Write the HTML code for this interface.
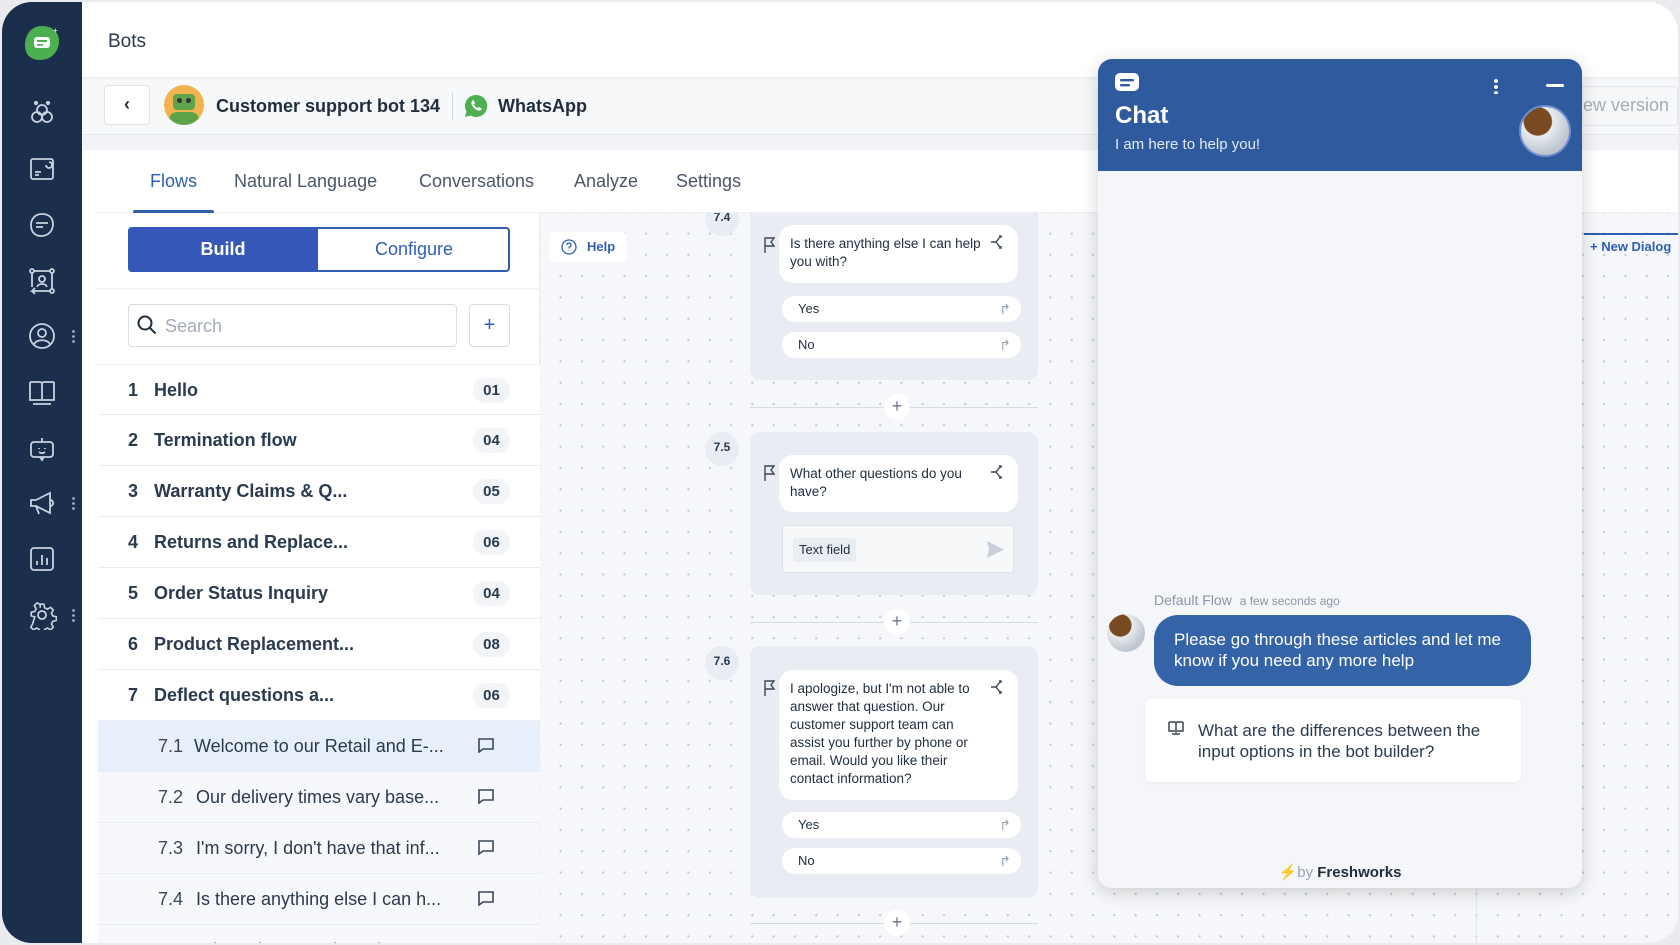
<!DOCTYPE html>
<html><head><meta charset="utf-8">
<style>
*{box-sizing:border-box;margin:0;padding:0}
body{width:1680px;height:945px;overflow:hidden;background:#e9ebee;font-family:"Liberation Sans",sans-serif;color:#1f2d3d;position:relative}
.abs{position:absolute}
#frame{position:absolute;left:2px;top:2px;width:1676px;height:941px;border-radius:30px;overflow:hidden;background:#fff}
#side{position:absolute;left:0;top:0;width:80px;height:941px;background:#1b2e4b}
.si{position:absolute;left:25px;width:30px;height:30px}
.dots3{position:absolute;left:70px;width:3px;height:14px;background:radial-gradient(circle,#8fa0b8 1.3px,transparent 1.6px) 0 0/3px 5px repeat-y}
.row{position:absolute;left:96px;width:442px;height:51px;border-bottom:1px solid #e8ecf1;background:#fff}
.row .n{position:absolute;left:30px;top:15px;font-size:18px;font-weight:bold;color:#2a3a4f}
.row .t{position:absolute;left:56px;top:15px;font-size:18px;font-weight:bold;color:#2a3a4f}
.row .b{position:absolute;left:375px;top:13px;width:37px;height:25px;border-radius:12px;background:#f2f4f7;font-size:15px;font-weight:bold;text-align:center;line-height:25px;color:#2a3a4f}
.sub{background:#f6f8fb}
.sub .n{left:60px;font-weight:normal;color:#3a475a}
.sub .t{left:98px;font-weight:normal;color:#2a3a4f}
.sub .ic{position:absolute;left:379px;top:16px;width:18px;height:16px}
.card{position:absolute;left:748px;width:288px;background:#e9edf3;border-radius:10px}
.bub{position:absolute;left:29px;width:239px;background:#fff;border-radius:14px;font-size:13.5px;line-height:18px;color:#1f2d3d;padding:10px 30px 10px 11px}
.opt{position:absolute;left:32px;width:239px;height:26px;background:#fff;border-radius:13px;font-size:13px;line-height:26px;padding-left:16px;color:#1f2d3d}
.opt:after{content:"↱";position:absolute;right:10px;top:0;color:#9aa5b4;font-size:14px}
.num{position:absolute;left:703px;width:34px;height:34px;border-radius:17px;background:#e9edf3;font-size:12px;font-weight:bold;text-align:center;line-height:30px;color:#2a3a4f}
.plus{position:absolute;left:748px;width:288px;height:1px;background:#d5dbe3}
.plus span{position:absolute;left:134px;top:-13px;width:26px;height:26px;border-radius:13px;background:#fff;text-align:center;line-height:25px;color:#6b778a;font-size:18px}
.flag{position:absolute;left:14px;width:12px;height:16px}
.br{position:absolute;right:14px;top:10px;width:14px;height:14px}
#clip{position:absolute;left:538px;top:211px;width:1142px;height:734px;overflow:hidden}
#clipin{position:absolute;left:-538px;top:-211px;width:1680px;height:945px}
</style></head><body>
<div id="frame">
<div id="side">
  <svg class="abs" style="left:20px;top:22px" width="40" height="38" viewBox="0 0 40 38"><path d="M20 2C30 2 37 8 37 17C37 28 29 36 18 36C8 36 3 30 3 21C3 10 10 2 20 2Z" fill="#4caf50"/><rect x="12" y="13" width="16" height="11" rx="3" fill="#fff"/><rect x="15" y="16" width="10" height="2" fill="#4caf50"/><rect x="15" y="20" width="6" height="1.6" fill="#4caf50"/><text x="31" y="9" font-size="8" fill="#fff">+</text></svg>
  <svg class="si" style="top:96px" viewBox="0 0 30 30" fill="none" stroke="#c9d3e0" stroke-width="1.8"><circle cx="10" cy="19" r="5"/><circle cx="20" cy="19" r="5"/><circle cx="15" cy="12" r="5"/><circle cx="9" cy="5" r="1.2"/><circle cx="21" cy="5" r="1.2"/></svg>
  <svg class="si" style="top:152px" viewBox="0 0 30 30" fill="none" stroke="#c9d3e0" stroke-width="1.8"><rect x="4" y="5" width="22" height="20" rx="2"/><path d="M8 18h6M8 21h4M19 11a3 3 0 1 0 3-3"/></svg>
  <svg class="si" style="top:208px" viewBox="0 0 30 30" fill="none" stroke="#c9d3e0" stroke-width="1.8"><path d="M15 4C22 4 26 8 26 14C26 21 21 26 14 26C8 26 4 22 4 15C4 8 9 4 15 4Z"/><path d="M9 13h12M9 17h7"/></svg>
  <svg class="si" style="top:264px" viewBox="0 0 30 30" fill="none" stroke="#c9d3e0" stroke-width="1.8"><circle cx="5" cy="5" r="2"/><circle cx="25" cy="5" r="2"/><circle cx="25" cy="25" r="2"/><path d="M7 5h16M25 7v16M23 25H5l3-3M5 25l3 3M5 7v14"/><circle cx="15" cy="13" r="3"/><path d="M10 21c1-4 9-4 10 0"/></svg>
  <svg class="si" style="top:319px" viewBox="0 0 30 30" fill="none" stroke="#c9d3e0" stroke-width="1.8"><circle cx="15" cy="15" r="12"/><circle cx="15" cy="12" r="4"/><path d="M7 23c3-5 13-5 16 0"/></svg>
  <svg class="si" style="top:375px" viewBox="0 0 30 30" fill="none" stroke="#c9d3e0" stroke-width="1.8"><path d="M3 5h10c1 0 2 1 2 2v17M27 5H17c-1 0-2 1-2 2M3 5v18h11M27 5v18H16M6 27h18"/></svg>
  <svg class="si" style="top:431px" viewBox="0 0 30 30" fill="none" stroke="#c9d3e0" stroke-width="1.8"><rect x="4" y="9" width="22" height="15" rx="3"/><path d="M15 9V5M12 15v1M18 15v1M12 19c2 1.5 4 1.5 6 0M13 24l2 3 2-3"/></svg>
  <svg class="si" style="top:486px" viewBox="0 0 30 30" fill="none" stroke="#c9d3e0" stroke-width="1.8"><path d="M4 12v6h5l14 7V5L9 12H4ZM9 18l3 8M23 12c2 0 3 1 3 3s-1 3-3 3"/></svg>
  <svg class="si" style="top:542px" viewBox="0 0 30 30" fill="none" stroke="#c9d3e0" stroke-width="1.8"><rect x="4" y="4" width="22" height="22" rx="3"/><path d="M10 21v-4M15 21V11M20 21v-7"/></svg>
  <svg class="si" style="top:598px" viewBox="0 0 30 30" fill="none" stroke="#c9d3e0" stroke-width="1.8"><circle cx="15" cy="15" r="4"/><path d="M13 3h4l1 4 3 1.5 3.5-2 3 3-2 3.5 1.5 3 4 1v4l-4 1-1.5 3 2 3.5-3 3-3.5-2-3 1.5-1 4h-4l-1-4-3-1.5-3.5 2-3-3 2-3.5L7 17l-4-1v-4l4-1 1.5-3-2-3.5 3-3 3.5 2L13 7Z" transform="translate(1.5 1.5) scale(0.9)"/></svg>
  <div class="dots3" style="top:327px"></div><div class="dots3" style="top:494px"></div><div class="dots3" style="top:606px"></div>
</div>
<div class="abs" style="left:80px;top:0;width:1600px;height:76px;background:#fff;border-bottom:1px solid #eceff3"></div>
<div class="abs" style="left:106px;top:29px;font-size:19px;color:#2a3a4f">Bots</div>
<div class="abs" style="left:80px;top:76px;width:1600px;height:72px;background:#f1f3f6"></div>
<div class="abs" style="left:80px;top:78px;width:1600px;height:55px;background:#f7f8fa;border-bottom:1px solid #e6e9ee"></div>
<div class="abs" style="left:102px;top:83px;width:46px;height:40px;background:#fff;border:1px solid #dfe3e8;border-radius:4px;text-align:center;line-height:37px;font-size:18px;font-weight:bold;color:#1f2d3d">‹</div>
<div class="abs" style="left:162px;top:83px;width:40px;height:40px;border-radius:20px;background:#f0b34d;overflow:hidden"><div class="abs" style="left:9px;top:9px;width:22px;height:16px;background:#5fa34a;border-radius:4px"></div><div class="abs" style="left:13px;top:13px;width:5px;height:5px;background:#333;border-radius:3px"></div><div class="abs" style="left:22px;top:13px;width:5px;height:5px;background:#333;border-radius:3px"></div><div class="abs" style="left:5px;top:27px;width:30px;height:16px;background:#5fa34a;border-radius:8px"></div></div>
<div class="abs" style="left:214px;top:94px;font-size:18px;font-weight:bold;color:#1f2d3d">Customer support bot 134</div>
<div class="abs" style="left:450px;top:90px;width:1px;height:28px;background:#d3d8de"></div>
<svg class="abs" style="left:462px;top:92px" width="24" height="24" viewBox="0 0 24 24"><path d="M12 1a11 11 0 0 0-9.5 16.5L1 23l5.7-1.5A11 11 0 1 0 12 1Z" fill="#4caf50"/><path d="M8 7c.5-1 1.5-1 2 0l1 2-1 1.5c.5 1.5 2 3 3.5 3.5L15 13l2 1c1 .5 1 1.5 0 2-2 1.5-5 0-7-2S6.5 9 8 7Z" fill="#fff"/></svg>
<div class="abs" style="left:496px;top:94px;font-size:18px;font-weight:bold;color:#1f2d3d">WhatsApp</div>
<div class="abs" style="left:1560px;top:84px;width:116px;height:40px;background:#f6f7f9;border:1px solid #e3e6eb;border-radius:4px"></div>
<div class="abs" style="left:1581px;top:93px;font-size:18px;color:#a4adb8">ew version</div>
<div class="abs" style="left:94px;top:148px;width:1586px;height:797px;background:#fff"></div>
<div class="abs" style="left:148px;top:169px;font-size:18px;color:#2f5fb3">Flows</div>
<div class="abs" style="left:232px;top:169px;font-size:18px;color:#4a5668">Natural Language</div>
<div class="abs" style="left:417px;top:169px;font-size:18px;color:#4a5668">Conversations</div>
<div class="abs" style="left:572px;top:169px;font-size:18px;color:#4a5668">Analyze</div>
<div class="abs" style="left:674px;top:169px;font-size:18px;color:#4a5668">Settings</div>
<div class="abs" style="left:94px;top:210px;width:1586px;height:1px;background:#eef0f3"></div>
<div class="abs" style="left:131px;top:208px;width:81px;height:4px;background:#2f5fb3;border-radius:2px"></div>
<div class="abs" style="left:538px;top:211px;width:1142px;height:734px;background:#f5f7fa radial-gradient(circle,#c5ccd6 1px,transparent 1.4px) 10px 10px/21.3px 21.3px"></div>
<div class="abs" style="left:1474px;top:211px;width:1px;height:734px;background:#e3e7ec"></div>
<div class="abs" style="left:1582px;top:231px;width:98px;height:2px;background:#2f5fb3"></div>
<div class="abs" style="left:1588px;top:237px;font-size:13px;font-weight:bold;color:#2f5fb3">+ New Dialog</div>
<div class="abs" style="left:548px;top:230px;width:76px;height:30px;background:#fff;border-radius:4px"></div>
<svg class="abs" style="left:559px;top:237px" width="16" height="16" viewBox="0 0 16 16" fill="none" stroke="#2f5fb3" stroke-width="1.3"><circle cx="8" cy="8" r="7"/><path d="M6 6a2 2 0 1 1 2.5 2c-.5.2-.5.8-.5 1.5M8 11.5v.5"/></svg>
<div class="abs" style="left:585px;top:237px;font-size:13px;font-weight:bold;color:#2f5fb3">Help</div>
<div class="abs" style="left:94px;top:211px;width:444px;height:734px;background:#fff;border-right:1px solid #e6e9ee"></div>
<div class="abs" style="left:126px;top:225px;width:382px;height:45px;border:2px solid #2f5fb3;border-radius:4px;background:#fff"></div>
<div class="abs" style="left:126px;top:225px;width:190px;height:45px;background:#3558b8;border-radius:4px 0 0 4px;color:#fff;font-size:18px;font-weight:bold;text-align:center;line-height:45px">Build</div>
<div class="abs" style="left:316px;top:225px;width:192px;height:45px;color:#2f5fb3;font-size:18px;text-align:center;line-height:45px">Configure</div>
<div class="abs" style="left:94px;top:286px;width:444px;height:1px;background:#eef0f3"></div>
<div class="abs" style="left:126px;top:302px;width:329px;height:43px;border:1px solid #d7dce3;border-radius:4px;background:#fff"></div>
<svg class="abs" style="left:135px;top:313px" width="20" height="20" viewBox="0 0 20 20" fill="none" stroke="#1f2d3d" stroke-width="2"><circle cx="8" cy="8" r="6.5"/><path d="M13 13l5.5 5.5"/></svg>
<div class="abs" style="left:163px;top:314px;font-size:18px;color:#a3acb8">Search</div>
<div class="abs" style="left:467px;top:302px;width:41px;height:43px;border:1px solid #d7dce3;border-radius:4px;background:#fff;text-align:center;line-height:40px;font-size:20px;color:#2f5fb3">+</div>
<div class="row" style="top:362px;border-top:1px solid #eef0f3"><span class="n">1</span><span class="t">Hello</span><span class="b">01</span></div>
<div class="row" style="top:413px"><span class="n">2</span><span class="t">Termination flow</span><span class="b">04</span></div>
<div class="row" style="top:464px"><span class="n">3</span><span class="t">Warranty Claims &amp; Q...</span><span class="b">05</span></div>
<div class="row" style="top:515px"><span class="n">4</span><span class="t">Returns and Replace...</span><span class="b">06</span></div>
<div class="row" style="top:566px"><span class="n">5</span><span class="t">Order Status Inquiry</span><span class="b">04</span></div>
<div class="row" style="top:617px"><span class="n">6</span><span class="t">Product Replacement...</span><span class="b">08</span></div>
<div class="row" style="top:668px"><span class="n">7</span><span class="t">Deflect questions a...</span><span class="b">06</span></div>
<div class="row sub" style="top:719px;background:#e7f0fa"><span class="n">7.1</span><span class="t" style="left:96px">Welcome to our Retail and E-...</span><svg class="ic" viewBox="0 0 18 16" fill="none" stroke="#3a475a" stroke-width="1.6"><path d="M2 2h14v10H6l-4 3Z"/></svg></div>
<div class="row sub" style="top:770px"><span class="n">7.2</span><span class="t">Our delivery times vary base...</span><svg class="ic" viewBox="0 0 18 16" fill="none" stroke="#3a475a" stroke-width="1.6"><path d="M2 2h14v10H6l-4 3Z"/></svg></div>
<div class="row sub" style="top:821px"><span class="n">7.3</span><span class="t">I'm sorry, I don't have that inf...</span><svg class="ic" viewBox="0 0 18 16" fill="none" stroke="#3a475a" stroke-width="1.6"><path d="M2 2h14v10H6l-4 3Z"/></svg></div>
<div class="row sub" style="top:872px"><span class="n">7.4</span><span class="t">Is there anything else I can h...</span><svg class="ic" viewBox="0 0 18 16" fill="none" stroke="#3a475a" stroke-width="1.6"><path d="M2 2h14v10H6l-4 3Z"/></svg></div>
<div class="row sub" style="top:923px"><span class="n">7.5</span><span class="t">What other questions do you...</span></div>
<div id="clip"><div id="clipin">
<div class="num" style="top:200px">7.4</div>
<div class="card" style="top:196px;height:182px">
  <svg class="flag" style="top:39px" viewBox="0 0 12 16" fill="none" stroke="#3a475a" stroke-width="1.4"><path d="M1 16V1h9l-3 4 3 4H1"/></svg>
  <div class="bub" style="top:27px;height:58px">Is there anything else I can help you with?<svg class="br" viewBox="0 0 14 14" fill="none" stroke="#3a475a" stroke-width="1.4"><path d="M1 7h5l4-5M6 7l4 5M9 1h2v2M9 13h2v-2"/></svg></div>
  <div class="opt" style="top:98px">Yes</div>
  <div class="opt" style="top:134px">No</div>
</div>
<div class="plus" style="top:405px"><span>+</span></div>
<div class="num" style="top:430px">7.5</div>
<div class="card" style="top:430px;height:163px">
  <svg class="flag" style="top:33px" viewBox="0 0 12 16" fill="none" stroke="#3a475a" stroke-width="1.4"><path d="M1 16V1h9l-3 4 3 4H1"/></svg>
  <div class="bub" style="top:23px;height:57px">What other questions do you have?<svg class="br" viewBox="0 0 14 14" fill="none" stroke="#3a475a" stroke-width="1.4"><path d="M1 7h5l4-5M6 7l4 5M9 1h2v2M9 13h2v-2"/></svg></div>
  <div class="abs" style="left:32px;top:93px;width:232px;height:48px;background:#f7f8fa;border:1px solid #dfe3e8;border-radius:3px"><div class="abs" style="left:10px;top:12px;padding:0 6px;height:24px;line-height:24px;background:#e9ecf0;border-radius:3px;font-size:13px">Text field</div><svg class="abs" style="left:203px;top:14px" width="19" height="19" viewBox="0 0 19 19"><path d="M1 1l17 8.5L1 18l2-8.5Z" fill="#c9cfd8"/></svg></div>
</div>
<div class="plus" style="top:620px"><span>+</span></div>
<div class="num" style="top:644px">7.6</div>
<div class="card" style="top:644px;height:252px">
  <svg class="flag" style="top:34px" viewBox="0 0 12 16" fill="none" stroke="#3a475a" stroke-width="1.4"><path d="M1 16V1h9l-3 4 3 4H1"/></svg>
  <div class="bub" style="top:24px;height:130px">I apologize, but I'm not able to answer that question. Our customer support team can assist you further by phone or email. Would you like their contact information?<svg class="br" viewBox="0 0 14 14" fill="none" stroke="#3a475a" stroke-width="1.4"><path d="M1 7h5l4-5M6 7l4 5M9 1h2v2M9 13h2v-2"/></svg></div>
  <div class="opt" style="top:166px">Yes</div>
  <div class="opt" style="top:202px">No</div>
</div>
<div class="plus" style="top:921px"><span>+</span></div>
</div></div>
<div class="abs" style="left:1096px;top:57px;width:484px;height:829px;border-radius:14px;background:#f5f6f9;box-shadow:0 4px 18px rgba(0,0,0,.18);overflow:hidden">
  <div class="abs" style="left:0;top:0;width:484px;height:112px;background:#2f5a9e"></div>
  <svg class="abs" style="left:17px;top:14px" width="24" height="20" viewBox="0 0 24 20"><rect x="0" y="0" width="24" height="18" rx="5" fill="#fff"/><rect x="5" y="6" width="14" height="2.4" rx="1" fill="#2f5a9e"/><rect x="5" y="11" width="10" height="2.4" rx="1" fill="#2f5a9e"/></svg>
  <div class="abs" style="left:17px;top:43px;font-size:24px;font-weight:bold;color:#fff">Chat</div>
  <div class="abs" style="left:17px;top:77px;font-size:15px;color:#e3eaf5">I am here to help you!</div>
  <div class="abs" style="left:396px;top:19px;width:4px;height:16px;background:radial-gradient(circle,#fff 1.8px,transparent 2.1px) 0 0/4px 6px repeat-y"></div>
  <div class="abs" style="left:448px;top:25px;width:18px;height:3px;background:#fff;border-radius:2px"></div>
  <div class="abs" style="left:421px;top:46px;width:52px;height:52px;border-radius:26px;background:radial-gradient(circle at 35% 30%,#7a4a22 0 30%,#e8ecf0 32%,#bfc6cf 70%);border:2px solid #6d8fd0"></div>
  <div class="abs" style="left:56px;top:533px;font-size:14px;color:#8a94a3">Default Flow <span style="font-size:12px;margin-left:4px">a few seconds ago</span></div>
  <div class="abs" style="left:9px;top:555px;width:38px;height:38px;border-radius:19px;background:radial-gradient(circle at 35% 30%,#7a4a22 0 30%,#e8ecf0 32%,#bfc6cf 70%)"></div>
  <div class="abs" style="left:56px;top:556px;width:377px;height:71px;border-radius:24px;background:#3563a8;color:#fff;font-size:17px;line-height:21px;padding:14px 20px">Please go through these articles and let me know if you need any more help</div>
  <div class="abs" style="left:47px;top:640px;width:376px;height:83px;background:#fff;border-radius:6px;box-shadow:0 1px 4px rgba(0,0,0,.05)"></div>
  <svg class="abs" style="left:70px;top:662px" width="16" height="14" viewBox="0 0 16 14" fill="none" stroke="#3a475a" stroke-width="1.5"><path d="M1 1h5.5c1 0 1.5.7 1.5 1.5V12M15 1H9.5C8.5 1 8 1.7 8 2.5M1 1v9h6M15 1v9H9M4 13h8"/></svg>
  <div class="abs" style="left:100px;top:661px;width:310px;font-size:17px;line-height:21px;color:#2a3a4f">What are the differences between the input options in the bot builder?</div>
  <div class="abs" style="left:0;top:804px;width:484px;text-align:center;font-size:15px;color:#9aa3af"><span style="color:#f5b93c">⚡</span>by <b style="color:#1f2d3d">Freshworks</b></div>
</div>
</div>
</body></html>
